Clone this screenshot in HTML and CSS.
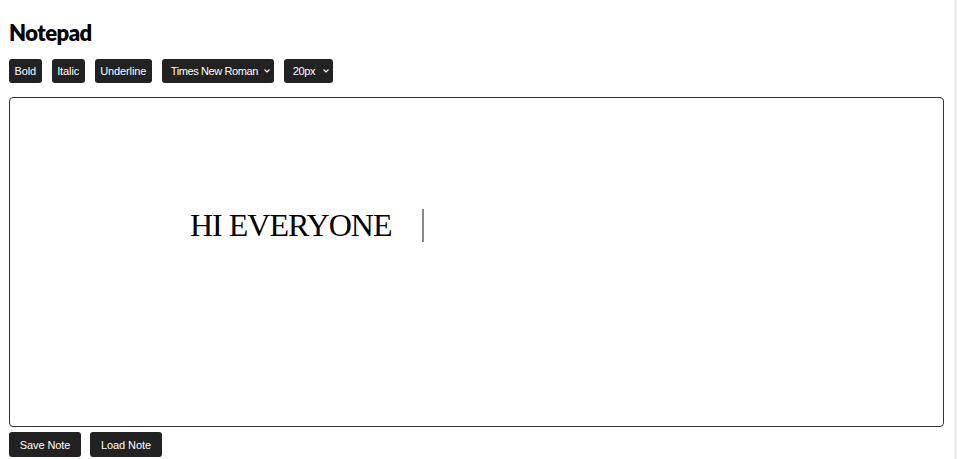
FILE: index.html
```html
<!DOCTYPE html>
<html>
<head>
<meta charset="utf-8">
<link rel="stylesheet" href="styles.css">
</head>
<body>
<div class="page">
  <h1 class="title">Notepad</h1>
  <div class="toolbar">
    <button class="btn">Bold</button>
    <button class="btn">Italic</button>
    <button class="btn">Underline</button>
    <div class="select select-font"><span class="select-label">Times New Roman</span><span class="chev"><svg width="8" height="6" viewBox="0 0 8 6"><path d="M1.5 1.5 L4 4 L6.5 1.5" fill="none" stroke="#fff" stroke-width="1.2"/></svg></span></div>
    <div class="select select-size"><span class="select-label">20px</span><span class="chev"><svg width="8" height="6" viewBox="0 0 8 6"><path d="M1.5 1.5 L4 4 L6.5 1.5" fill="none" stroke="#fff" stroke-width="1.2"/></svg></span></div>
  </div>
  <div class="editor">
    <div class="line"><span class="content">HI EVERYONE</span><span class="caret"></span></div>
  </div>
  <div class="actions">
    <button class="btn btn-lg">Save Note</button>
    <button class="btn btn-lg">Load Note</button>
  </div>
</div>
<div class="scrollbar"></div>
</body>
</html>
```
FILE: styles.css
```css
html, body {
  margin: 0;
  padding: 0;
  background: #fff;
  overflow: hidden;
}
body {
  width: 957px;
  height: 459px;
  position: relative;
  font-family: "Liberation Sans", Arial, sans-serif;
}
.page {
  padding: 19px 9px 0 9px;
  width: 935px;
}
.title {
  margin: 0;
  font-family: "Lato", "Open Sans", sans-serif;
  font-weight: 800;
  font-size: 22px;
  line-height: 28px;
  color: #000;
  letter-spacing: -0.5px;
}
.toolbar {
  display: flex;
  gap: 10px;
  margin-top: 12px;
  height: 24px;
}
.btn {
  flex: none;
  background: #222;
  color: #fff;
  border: none;
  border-radius: 3px;
  font-family: "Liberation Sans", Arial, sans-serif;
  font-size: 11px;
  letter-spacing: -0.1px;
  height: 24px;
  padding: 0 5.5px;
  margin: 0;
}
.select {
  flex: none;
  background: #222;
  color: #fff;
  border-radius: 3px;
  font-size: 11px;
  letter-spacing: -0.4px;
  height: 24px;
  display: flex;
  align-items: center;
  box-sizing: border-box;
  padding-left: 9px;
  white-space: nowrap;
}
.select-font { width: 112px; }
.select-size { width: 49px; }
.chev {
  margin-left: auto;
  margin-right: 3px;
  display: flex;
}
.editor {
  margin-top: 14px;
  height: 330px;
  width: 935px;
  box-sizing: border-box;
  border: 1.5px solid #333;
  border-radius: 4px;
  padding: 110px 0 0 180px;
}
.line {
  display: flex;
  align-items: center;
  height: 34px;
}
.content {
  font-family: "Liberation Serif", "Times New Roman", serif;
  font-size: 32px;
  letter-spacing: -1px;
  color: #000;
}
.caret {
  display: inline-block;
  width: 1.5px;
  height: 33px;
  background: #888;
  margin-left: 31px;
}
.actions {
  display: flex;
  gap: 9px;
  margin-top: 5px;
}
.btn-lg {
  width: 72px;
  height: 25px;
}
.scrollbar {
  position: absolute;
  right: 0;
  top: 0;
  width: 3px;
  height: 459px;
  background: #f0f0f0;
}
```
